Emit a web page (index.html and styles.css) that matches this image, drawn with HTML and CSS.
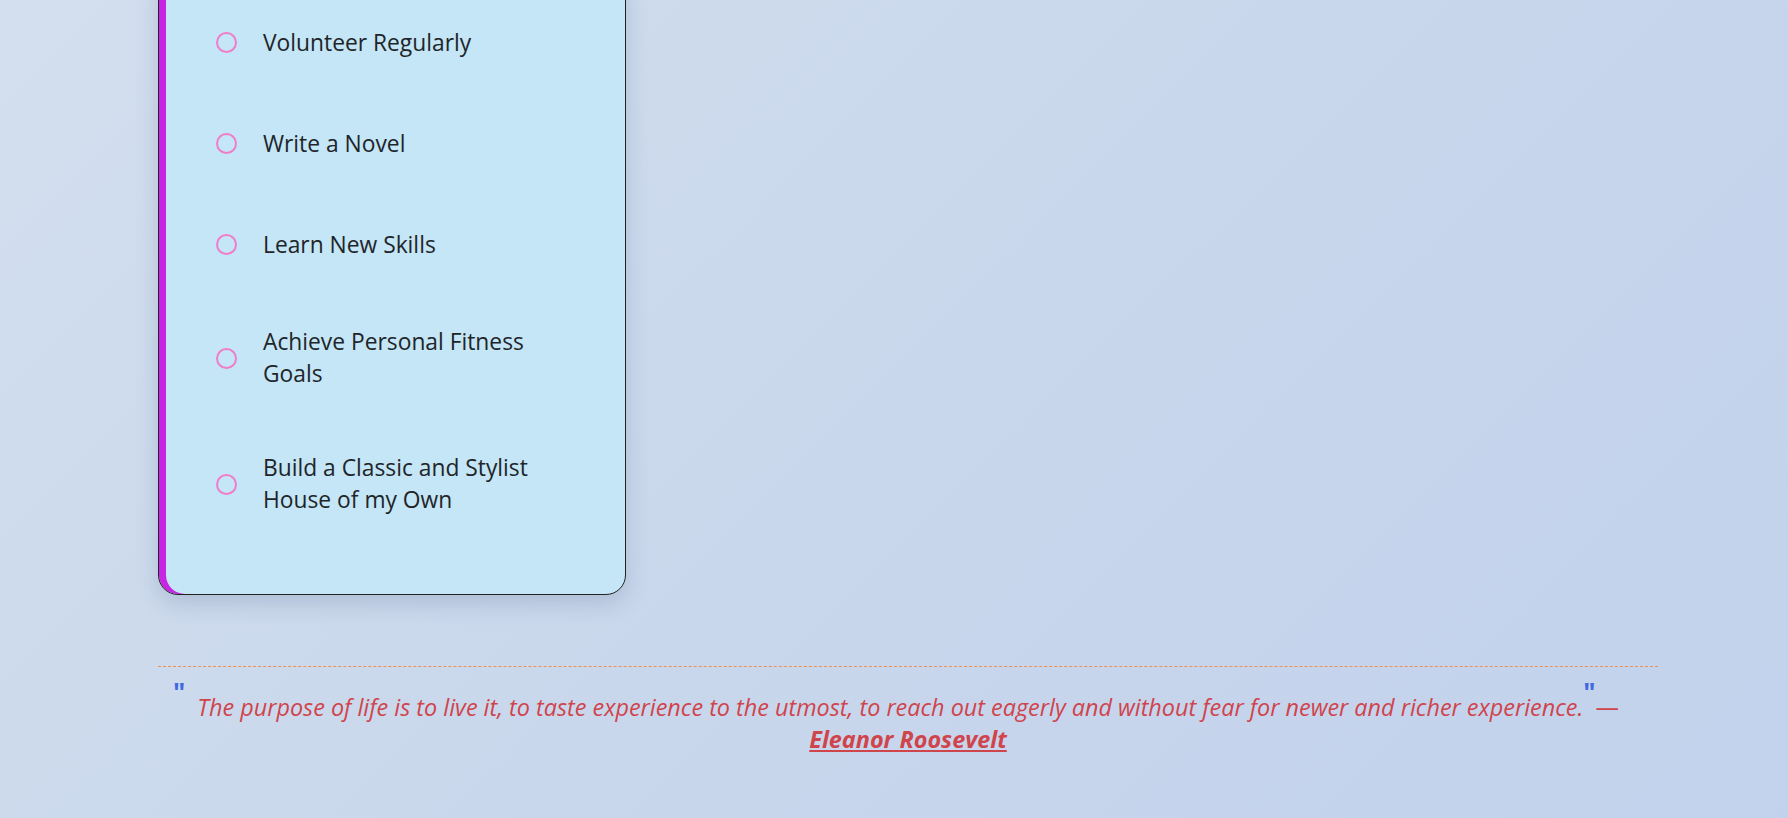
FILE: index.html
```html
<!DOCTYPE html>
<html lang="en">
<head>
<meta charset="utf-8">
<title>Bucket List</title>
<link rel="stylesheet" href="styles.css">
</head>
<body>
<main class="page">
  <section class="card">
    <ul class="goals">
      <li class="goal"><span class="check"></span><span class="label">Volunteer Regularly</span></li>
      <li class="goal"><span class="check"></span><span class="label">Write a Novel</span></li>
      <li class="goal"><span class="check"></span><span class="label">Learn New Skills</span></li>
      <li class="goal"><span class="check"></span><span class="label">Achieve Personal Fitness Goals</span></li>
      <li class="goal"><span class="check"></span><span class="label">Build a Classic and Stylist House of my Own</span></li>
    </ul>
  </section>
  <blockquote class="quote">
    <p><span class="qmark qmark-open">"</span><em class="qtext">The purpose of life is to live it, to taste experience to the utmost, to reach out eagerly and without fear for newer and richer experience.</em><span class="qmark qmark-close">"</span><span class="dash">—</span> <cite class="author">Eleanor Roosevelt</cite></p>
  </blockquote>
</main>
</body>
</html>
```
FILE: styles.css
```css
* { box-sizing: border-box; }
html, body { height: 100%; }
body {
  margin: 0;
  font-family: "Open Sans", "Noto Sans", sans-serif;
  color: #212529;
  background: linear-gradient(135deg, #d3dfee 0%, #c9d7ec 50%, #c2d2ec 100%);
  overflow: hidden;
}
.page {
  width: 1500px;
  margin: -29px 0 0 158px;
}
.card {
  width: 468px;
  background: #c4e6f6;
  border: 1px solid #222;
  border-radius: 20px;
  box-shadow: inset 7px 0 0 #c724e3, 0 8px 22px rgba(70, 90, 130, 0.22);
  padding: 20px 56px 47px 57px;
}
.goals {
  list-style: none;
  margin: 0;
  padding: 0;
}
.goal {
  display: flex;
  align-items: center;
  gap: 26px;
  min-height: 101px;
  padding: 31px 0;
  font-size: 22.8px;
  line-height: 32px;
}
.check {
  flex: none;
  width: 21px;
  height: 21px;
  border: 2px solid #f07dc9;
  border-radius: 50%;
}
.label { flex: 1; }
.quote {
  margin: 71px 0 0;
  border-top: 1px dashed #f09050;
  padding: 23px 0 0;
  text-align: center;
  font-size: 23.4px;
  line-height: 32px;
  color: #d0444c;
}
.quote p { margin: 0; }
.qtext { font-style: italic; }
.qmark {
  position: relative;
  top: -14px;
  color: #4169e1;
  font-size: 26px;
  font-weight: 700;
}
.qmark-open { margin-right: 12px; }
.dash { padding-right: 24px; }
.author {
  font-style: italic;
  font-weight: 700;
  text-decoration: underline;
}
```
